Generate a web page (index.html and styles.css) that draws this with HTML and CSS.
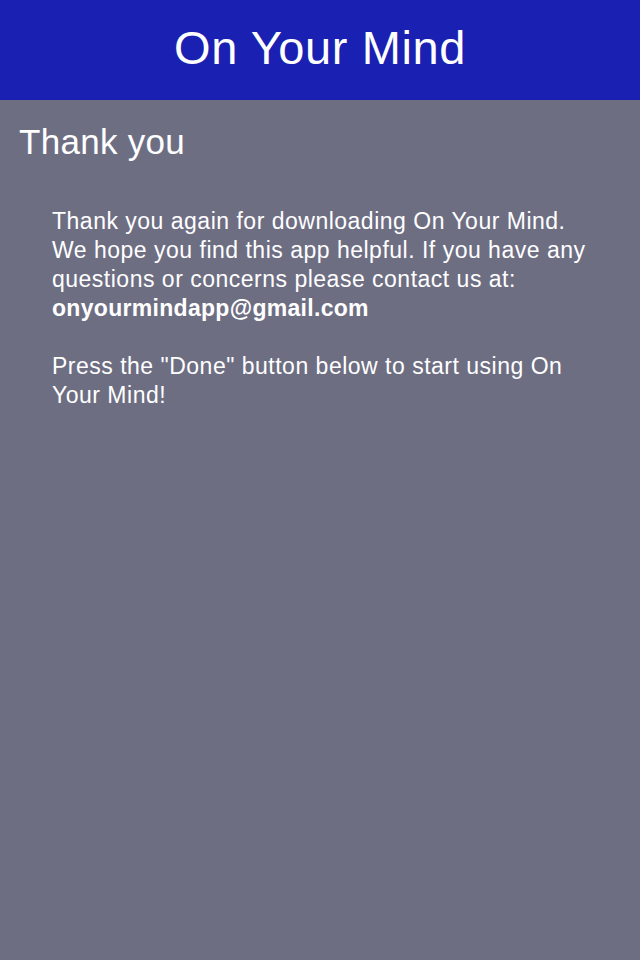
FILE: index.html
```html
<!DOCTYPE html>
<html lang="en">
<head>
<meta charset="utf-8">
<title>On Your Mind</title>
<link rel="stylesheet" href="styles.css">
</head>
<body>
<header class="topbar">
  <h1 class="topbar-title">On Your Mind</h1>
</header>
<main class="content">
  <h2 class="section-title">Thank you</h2>
  <div class="message">
    <p>Thank you again for downloading On Your Mind. We hope you find this app helpful. If you have any questions or concerns please contact us at: <strong>onyourmindapp@gmail.com</strong></p>
    <p>Press the "Done" button below to start using On Your Mind!</p>
  </div>
</main>
</body>
</html>
```
FILE: styles.css
```css
html, body {
  margin: 0;
  padding: 0;
  height: 100%;
}
body {
  background: #6e6e83;
  font-family: "Liberation Sans", Arial, sans-serif;
  color: #ffffff;
  display: flex;
  flex-direction: column;
}
.topbar {
  height: 100px;
  box-sizing: border-box;
  padding-bottom: 6px;
  background: #1a20b1;
  display: flex;
  align-items: center;
  justify-content: center;
  flex-shrink: 0;
}
.topbar-title {
  margin: 0;
  font-size: 47px;
  font-weight: normal;
  line-height: 1;
  letter-spacing: 0.6px;
}
.content {
  flex: 1;
  padding: 22px 0 0 19px;
}
.section-title {
  margin: 0;
  font-size: 35px;
  font-weight: normal;
  line-height: 40px;
  letter-spacing: 0.3px;
}
.message {
  padding: 45px 50px 0 33px;
  font-size: 23px;
  line-height: 29px;
  letter-spacing: 0.5px;
}
.message p {
  margin: 0 0 29px;
}
.message strong {
  font-weight: bold;
  letter-spacing: 0.3px;
}
```
